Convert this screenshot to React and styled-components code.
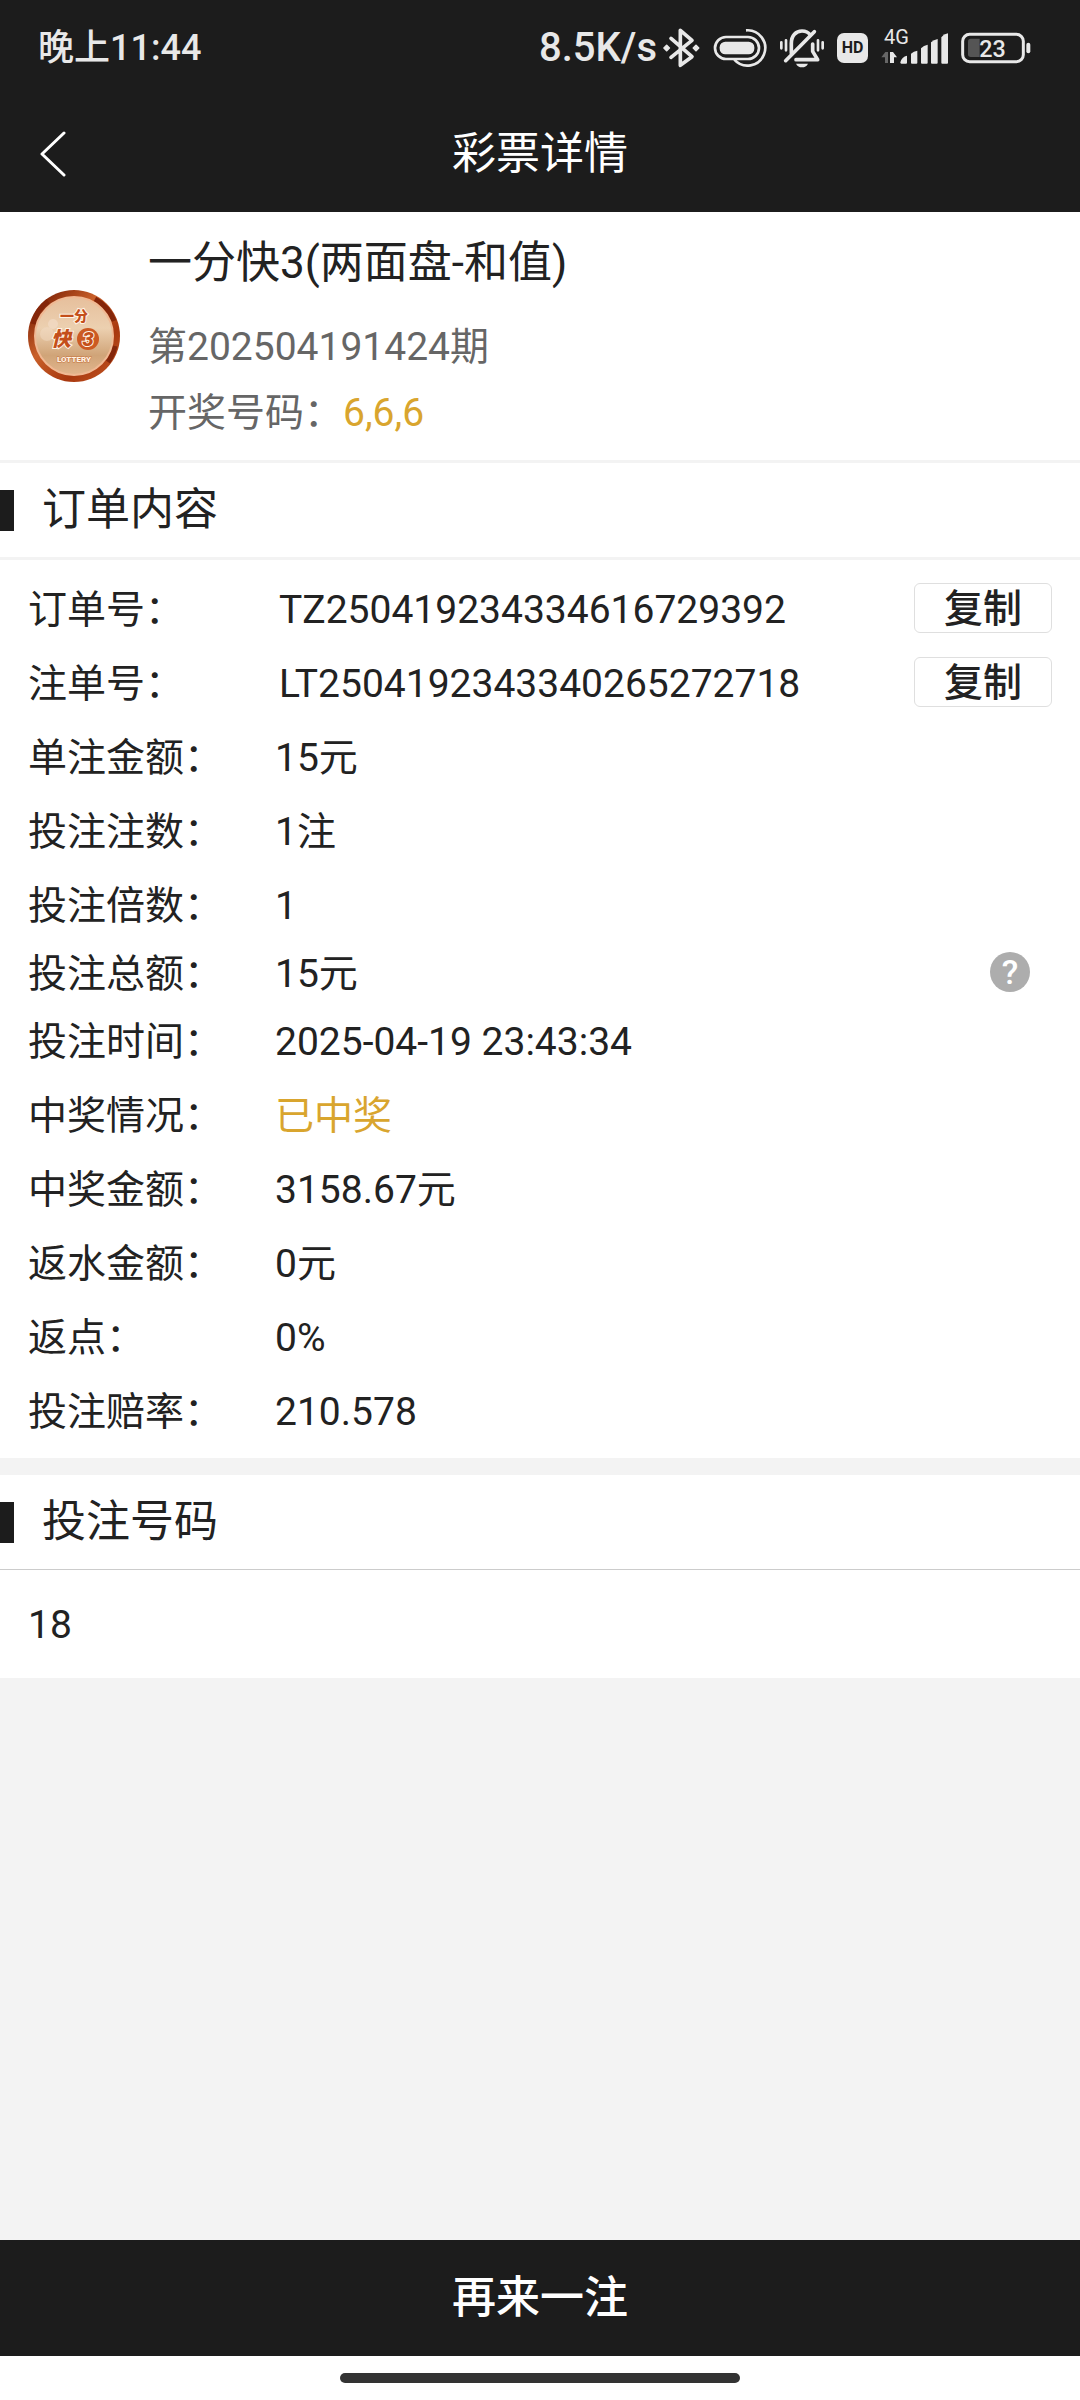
import React from 'react';

//css
import styled, { createGlobalStyle } from "styled-components"

const orderRows = [
    { label: "订单号：", value: "TZ250419234334616729392", copy: true },
    { label: "注单号：", value: "LT2504192343340265272718", copy: true },
    { label: "单注金额：", value: "15元" },
    { label: "投注注数：", value: "1注" },
    { label: "投注倍数：", value: "1" },
    { label: "投注总额：", value: "15元", help: true },
    { label: "投注时间：", value: "2025-04-19 23:43:34" },
    { label: "中奖情况：", value: "已中奖", win: true },
    { label: "中奖金额：", value: "3158.67元" },
    { label: "返水金额：", value: "0元" },
    { label: "返点：", value: "0%" },
    { label: "投注赔率：", value: "210.578" },
];

const BluetoothIcon = () => (
    <svg width="37" height="40" viewBox="0 0 111 120" fill="none" aria-hidden="true">
        <path d="M24 31 L87 86 L52 112 V7 L87 37 L24 88" stroke="#e8e8e8" strokeWidth="11" strokeLinecap="round" strokeLinejoin="round" />
        <path d="M3 60 L11 52 L19 60 L11 68 Z M91 60 L99 52 L107 60 L99 68 Z" fill="#e8e8e8" stroke="#e8e8e8" strokeWidth="5" strokeLinejoin="round" />
    </svg>
);

const CapsuleIcon = () => (
    <svg width="54" height="40" viewBox="0 0 162 120" fill="none" aria-hidden="true">
        <path d="M99 7 A53 53 0 1 1 64 95" stroke="#e8e8e8" strokeWidth="8" />
        <rect x="6" y="27" width="132" height="66" rx="33" fill="#1c1c1c" stroke="#e8e8e8" strokeWidth="8" />
        <rect x="20" y="41" width="104" height="38" rx="17" fill="#e8e8e8" />
    </svg>
);

const MuteIcon = () => (
    <svg width="44" height="40" viewBox="0 0 132 120" fill="none" stroke="#e8e8e8" strokeWidth="11" strokeLinecap="round" strokeLinejoin="round" aria-hidden="true">
        <path d="M4 43 V61 M18 37 V67 M114 37 V67 M128 43 V61" strokeWidth="8" />
        <path d="M34 76 V46 C34 22 48 9 66 9 C77 9 86 14 91 21" />
        <path d="M17 98 L103 11" />
        <path d="M98 48 V70 L113 95 H48" />
        <path d="M48 107 H84 C80 115 74 118 66 118 C58 118 52 115 48 107 Z" fill="#e8e8e8" stroke="none" />
    </svg>
);

const SignalIcon = () => (
    <svg width="67" height="52" viewBox="0 -18 201 156" aria-hidden="true">
        <SignalText x="9" y="49">4G</SignalText>
        <path d="M1 88 L13 72 H21 V105 H12 V88 Z" fill="#666" />
        <path d="M27 105 V72 H36 L48 88 H39 V105 Z" fill="#e8e8e8" />
        <g fill="#e8e8e8">
            <path d="M58 103 C60 92 68 85 78 83 V104 Q78 107 75 107 H61 Q58 107 58 103 Z" />
            <path d="M90 77 Q98 69 109 68 V104 Q109 107 106 107 H93 Q90 107 90 104 Z" />
            <path d="M120 61 Q128 52 140 50 V104 Q140 107 137 107 H123 Q120 107 120 104 Z" />
            <path d="M150 43 Q158 35 170 33 V104 Q170 107 167 107 H153 Q150 107 150 104 Z" />
            <path d="M181 28 Q188 18 201 16 V104 Q201 107 198 107 H184 Q181 107 181 104 Z" />
        </g>
    </svg>
);

const BatteryIcon = () => (
    <svg width="70" height="32" viewBox="0 0 210 96" aria-hidden="true">
        <rect x="5" y="7" width="182" height="82" rx="21" fill="none" stroke="#e8e8e8" strokeWidth="9" />
        <path d="M29 20 H56 V75 H29 Q21 75 21 67 V28 Q21 20 29 20 Z" fill="#555" />
        <BatteryText x="55" y="74">23</BatteryText>
        <rect x="196" y="32" width="12" height="32" rx="6" fill="#e8e8e8" />
    </svg>
);

// 彩种图标
const Medal = () => (
    <svg width="92" height="92" viewBox="0 0 92 92" role="img" aria-label="一分快3">
        <defs>
            <linearGradient id="medalRim" x1="0" y1="0" x2="1" y2="1">
                <stop offset="0" stopColor="#c85a22" />
                <stop offset="0.15" stopColor="#8a2c0c" />
                <stop offset="0.4" stopColor="#c9602a" />
                <stop offset="0.7" stopColor="#a8380f" />
                <stop offset="1" stopColor="#c75a26" />
            </linearGradient>
            <linearGradient id="medalFace" x1="0" y1="0" x2="0" y2="1">
                <stop offset="0" stopColor="#e6bf9c" />
                <stop offset="0.4" stopColor="#ecd0b0" />
                <stop offset="0.75" stopColor="#d0a478" />
                <stop offset="1" stopColor="#e2b68e" />
            </linearGradient>
        </defs>
        <circle cx="46" cy="46" r="46" fill="url(#medalRim)" />
        <path d="M5 34 A43 43 0 0 1 20 11 M67 9 A43 43 0 0 1 86 31 M87 56 A43 43 0 0 1 80 72" fill="none" stroke="#84260a" strokeWidth="5" />
        <circle cx="46" cy="46" r="39" fill="url(#medalFace)" stroke="#f0b994" strokeWidth="2" />
        <circle cx="25" cy="34" r="5" fill="#f2dcc6" opacity="0.7" />
        <circle cx="19" cy="44" r="7" fill="#f2dcc6" opacity="0.5" />
        <MedalText x="46" y="31" $size={14}>一分</MedalText>
        <circle cx="60" cy="49" r="11" fill="#cc5a22" />
        <MedalText x="33" y="56" $size={20} $italic>快</MedalText>
        <MedalText x="60" y="56" $size={20} $italic>3</MedalText>
        <MedalText x="46" y="72" $size={8} $light>LOTTERY</MedalText>
    </svg>
);

const App = () => {
    const onClickCopy = (text) => {
        navigator.clipboard?.writeText(text);
    }

    return(
        <PageWrap>
            <GlobalStyle />

            {/* 状态栏 */}
            <StatusBar>
                <Clock>晚上11:44</Clock>
                <StatusIcons>
                    <Network>
                        <Speed>8.5K/s</Speed>
                        <BluetoothIcon />
                    </Network>
                    <CapsuleIcon />
                    <MuteIcon />
                    <HdBadge>HD</HdBadge>
                    <SignalIcon />
                    <BatteryIcon />
                </StatusIcons>
            </StatusBar>

            {/* 标题栏 */}
            <Header>
                <BackButton type="button" aria-label="返回">
                    <svg width="28" height="46" viewBox="0 0 28 46" fill="none" aria-hidden="true">
                        <path d="M25 2 L3 23 L25 44" stroke="#fff" strokeWidth="3" strokeLinecap="round" strokeLinejoin="round" />
                    </svg>
                </BackButton>
                <HeaderTitle>彩票详情</HeaderTitle>
            </Header>

            <main>
                <Summary>
                    <Medal />
                    <SummaryInfo>
                        <GameName>一分快3(两面盘-和值)</GameName>
                        <SummaryText>第202504191424期</SummaryText>
                        <SummaryText>开奖号码：<Gold>6,6,6</Gold></SummaryText>
                    </SummaryInfo>
                </Summary>

                {/* 订单内容 */}
                <Section>
                    <SectionTitle>订单内容</SectionTitle>
                    <OrderList>
                        {
                            orderRows.map((row) => (
                                <OrderRow key={row.label} $short={row.help}>
                                    <Label>{row.label}</Label>
                                    <Value $code={row.copy}>
                                        {row.win ? <Gold>{row.value}</Gold> : row.value}
                                    </Value>
                                    {row.copy && <CopyButton type="button" onClick={() => onClickCopy(row.value)}>复制</CopyButton>}
                                    {row.help && <HelpButton type="button" aria-label="投注总额说明">?</HelpButton>}
                                </OrderRow>
                            ))
                        }
                    </OrderList>
                </Section>

                {/* 投注号码 */}
                <Section $gap>
                    <SectionTitle $line>投注号码</SectionTitle>
                    <BetNumber>18</BetNumber>
                </Section>
            </main>

            <Footer>
                <AgainButton type="button">再来一注</AgainButton>
                <HomeArea><HomeBar /></HomeArea>
            </Footer>
        </PageWrap>
    )
};

export default App;


const GlobalStyle = createGlobalStyle`
    * {
        box-sizing: border-box;
    }
    body {
        margin: 0;
        background: #f3f3f3;
        color: #222;
        font-family: Roboto, "Noto Sans CJK SC", sans-serif;
    }
    h1, h2, p, dl, dd {
        margin: 0;
        font-weight: 400;
    }
    button {
        padding: 0;
        border: none;
        background: none;
        color: inherit;
        font-family: inherit;
        cursor: pointer;
    }
    svg {
        display: block;
        flex-shrink: 0;
    }
`

const PageWrap = styled.div`
    min-height: 100vh;
    display: flex;
    flex-direction: column;
`

// ----- 状态栏
const StatusBar = styled.div`
    height: 96px;
    padding: 0 49px 0 38px;
    display: flex;
    align-items: center;
    justify-content: space-between;
    background: #1c1c1c;
    color: #e8e8e8;
`
const Clock = styled.span`
    font-size: 36px;
    line-height: 40px;
    font-weight: 500;
`
const StatusIcons = styled.div`
    display: flex;
    align-items: center;
    gap: 13px;
`
const Network = styled.div`
    display: flex;
    align-items: center;
    gap: 6px;
`
const Speed = styled.span`
    font-size: 40px;
    line-height: 40px;
    font-weight: 500;
`
const HdBadge = styled.span`
    width: 31px;
    height: 30px;
    border-radius: 7px;
    background: #e8e8e8;
    color: #1c1c1c;
    font-size: 16px;
    line-height: 30px;
    font-weight: 700;
    text-align: center;
`
const SignalText = styled.text`
    fill: #e8e8e8;
    font-size: 60px;
    font-weight: 400;
`
const BatteryText = styled.text`
    fill: #e8e8e8;
    font-size: 70px;
    font-weight: 500;
`

// ----- 标题栏
const Header = styled.header`
    height: 116px;
    padding: 0 39px;
    display: grid;
    grid-template-columns: 1fr auto 1fr;
    align-items: center;
    background: #1c1c1c;
    color: #fff;
`
const BackButton = styled.button`
    justify-self: start;
`
const HeaderTitle = styled.h1`
    font-size: 44px;
    line-height: 66px;
`

// ----- 彩种信息
const Summary = styled.section`
    height: 248px;
    padding: 0 28px;
    display: flex;
    align-items: center;
    gap: 28px;
    background: #fff;
`
const SummaryInfo = styled.div`
    padding-top: 4px;
`
const MedalText = styled.text`
    font-size: ${({ $size }) => $size}px;
    font-weight: 900;
    font-style: ${({ $italic }) => $italic ? "italic" : "normal"};
    text-anchor: middle;
    fill: ${({ $light }) => $light ? "#fff3e4" : "#c44f1a"};
    stroke: ${({ $light }) => $light ? "#c9743f" : "#fff3e4"};
    stroke-width: ${({ $light }) => $light ? 1 : 2}px;
    paint-order: stroke;
`
const GameName = styled.h2`
    margin-bottom: 18px;
    font-size: 44px;
    line-height: 66px;
`
const SummaryText = styled.p`
    color: #666;
    font-size: 39px;
    line-height: 66px;
`
const Gold = styled.span`
    color: #d9a52e;
`

// ----- 内容区域
const Section = styled.section`
    margin-top: ${({ $gap }) => $gap ? 17 : 3}px;
    background: #fff;
`
const SectionTitle = styled.h2`
    height: ${({ $line }) => $line ? 95 : 97}px;
    border-bottom: ${({ $line }) => $line ? "1px solid #ccc" : "3px solid #f3f3f3"};
    display: flex;
    align-items: center;
    gap: 28px;
    font-size: 44px;
    line-height: 66px;

    &::before {
        content: "";
        width: 14px;
        height: 41px;
        background: #1c1c1c;
    }
`
const OrderList = styled.dl`
    padding: 11px 28px;
`
const OrderRow = styled.div`
    min-height: ${({ $short }) => $short ? 62 : 74}px;
    display: flex;
    align-items: center;
    font-size: 39px;
    line-height: 50px;
`
const Label = styled.dt`
    width: 247px;
    padding-top: 3px;
    flex-shrink: 0;
`
const Value = styled.dd`
    flex: 1;
    padding-top: 3px;
    padding-left: ${({ $code }) => $code ? 4 : 0}px;
`
const CopyButton = styled.button`
    width: 138px;
    height: 50px;
    padding-top: 2px;
    border: 1px solid #dfdfdf;
    border-radius: 6px;
    font-size: 39px;
    line-height: 46px;
    font-weight: 500;
`
const HelpButton = styled.button`
    width: 40px;
    height: 40px;
    margin-right: 22px;
    border-radius: 50%;
    background: #adadad;
    color: #fff;
    font-size: 34px;
    line-height: 40px;
    font-weight: 500;
`
const BetNumber = styled.p`
    padding: 30px 28px 28px;
    font-size: 39px;
    line-height: 50px;
`

// ----- 底部
const Footer = styled.footer`
    margin-top: auto;
    background: #fff;
`
const AgainButton = styled.button`
    width: 100%;
    height: 116px;
    background: #1c1c1c;
    color: #fff;
    font-size: 44px;
    line-height: 66px;
    font-weight: 500;
`
const HomeArea = styled.div`
    padding: 17px 0;
`
const HomeBar = styled.div`
    width: 37%;
    height: 10px;
    margin: 0 auto;
    border-radius: 5px;
    background: #333;
`
